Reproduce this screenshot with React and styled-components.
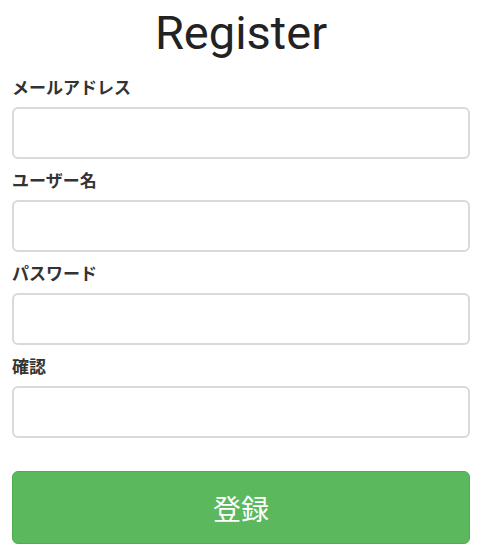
import React from "react";
import styled, { createGlobalStyle } from "styled-components";

const Global = createGlobalStyle`
  html, body { margin: 0; padding: 0; background: #fff; }
  body { font-family: "Noto Sans CJK JP", "Noto Sans", sans-serif; color: #333; }
  * { box-sizing: border-box; }
`;

const Page = styled.div`
  width: 489px;
  padding: 0 19px 0 12px;
  display: flex;
  flex-direction: column;
`;

const Title = styled.h1`
  margin: 3px 0 12px;
  font-family: Roboto, "Liberation Sans", sans-serif;
  font-weight: 400;
  font-size: 47px;
  line-height: 60px;
  color: #222;
  text-align: center;
`;

const Field = styled.div`
  display: flex;
  flex-direction: column;
  gap: 8px;
  margin-bottom: 9px;
`;

const Label = styled.label`
  font-size: 17px;
  font-weight: 700;
  line-height: 24px;
  color: #333;
`;

const Input = styled.input`
  height: 52px;
  width: 100%;
  border: 2px solid #d9d9d9;
  border-radius: 6px;
  background: #fff;
  padding: 0 12px;
  font-size: 16px;
  outline: none;
`;

const Submit = styled.button`
  margin-top: 24px;
  height: 73px;
  width: 100%;
  border: 1px solid #4cae4c;
  border-radius: 6px;
  background: #5cb85c;
  color: #fff;
  font-family: "Noto Sans CJK JP", sans-serif;
  font-size: 28px;
  font-weight: 400;
  cursor: pointer;
`;

const fields = ["メールアドレス", "ユーザー名", "パスワード", "確認"];

export default function App() {
  return (
    <>
      <Global />
      <Page>
        <Title>Register</Title>
        {fields.map((f, i) => (
          <Field key={f}>
            <Label htmlFor={"f" + i}>{f}</Label>
            <Input id={"f" + i} type={i >= 2 ? "password" : "text"} />
          </Field>
        ))}
        <Submit>登録</Submit>
      </Page>
    </>
  );
}
